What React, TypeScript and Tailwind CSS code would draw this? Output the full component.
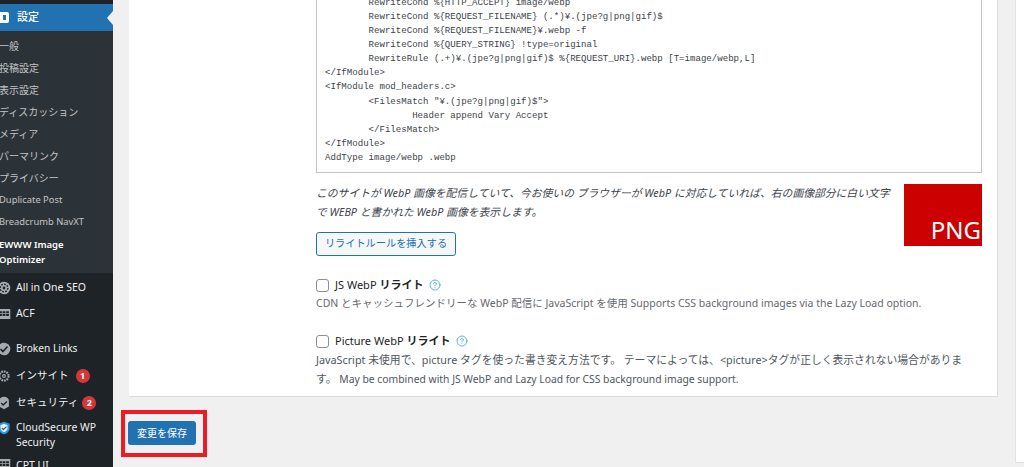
import { CircleHelp } from 'lucide-react';

const SANS = 'font-["Noto_Sans","Noto_Sans_CJK_JP",sans-serif]';

const code = `        RewriteCond %{HTTP_ACCEPT} image/webp
        RewriteCond %{REQUEST_FILENAME} (.*)¥.(jpe?g|png|gif)$
        RewriteCond %{REQUEST_FILENAME}¥.webp -f
        RewriteCond %{QUERY_STRING} !type=original
        RewriteRule (.+)¥.(jpe?g|png|gif)$ %{REQUEST_URI}.webp [T=image/webp,L]
</IfModule>
<IfModule mod_headers.c>
        <FilesMatch "¥.(jpe?g|png|gif)$">
                Header append Vary Accept
        </FilesMatch>
</IfModule>
AddType image/webp .webp`;

const subItems = ['一般', '投稿設定', '表示設定', 'ディスカッション', 'メディア', 'パーマリンク', 'プライバシー'];
const subItemsLatin = ['Duplicate Post', 'Breadcrumb NavXT'];

function Gear() {
  return (
    <svg viewBox="0 0 20 20" className="w-[14px] h-[14px] shrink-0 -ml-[3px]">
      <circle cx="10" cy="10" r="9" fill="#a7aaad" />
      <circle cx="10" cy="10" r="5.5" fill="none" stroke="#1d2327" strokeWidth="2" strokeDasharray="2.6 1.6" />
      <circle cx="10" cy="10" r="2" fill="#1d2327" />
    </svg>
  );
}

function Grid() {
  return (
    <svg viewBox="0 0 20 20" className="w-[14px] h-[14px] shrink-0 -ml-[3px]" fill="#a7aaad">
      <path d="M1 3h18v14H1V3Zm2 3v3h4V6H3Zm5 0v3h4V6H8Zm5 0v3h4V6h-4ZM3 10v3h4v-3H3Zm5 0v3h4v-3H8Zm5 0v3h4v-3h-4Z" fillRule="evenodd" />
    </svg>
  );
}

function Check() {
  return (
    <svg viewBox="0 0 20 20" className="w-[14px] h-[14px] shrink-0 -ml-[3px]">
      <circle cx="10" cy="10" r="9" fill="#a7aaad" />
      <path d="M5 10l3.5 3.5L15 6.5" fill="none" stroke="#1d2327" strokeWidth="2.4" />
    </svg>
  );
}

function Cog() {
  return (
    <svg viewBox="0 0 20 20" className="w-[14px] h-[14px] shrink-0 -ml-[3px]" fill="none" stroke="#a7aaad" strokeWidth="3" strokeDasharray="2.5 1.2">
      <circle cx="10" cy="10" r="6.5" />
      <circle cx="10" cy="10" r="2" strokeDasharray="none" strokeWidth="1.6" />
    </svg>
  );
}

function Lock() {
  return (
    <svg viewBox="0 0 20 20" className="w-[14px] h-[14px] shrink-0 -ml-[3px]">
      <path d="M3 7a7 6 0 0 1 14 0v8l-7 4-7-4V7Z" fill="#a7aaad" />
      <path d="M6 10l3 3 5-5" fill="none" stroke="#1d2327" strokeWidth="2" />
    </svg>
  );
}

function Shield() {
  return (
    <svg viewBox="0 0 20 20" className="w-[14px] h-[14px] shrink-0 -ml-[3px] mt-[1px]">
      <path d="M10 1l8 3v6c0 5-4 8-8 9-4-1-8-4-8-9V4l8-3Z" fill="#2a9ad6" />
      <path d="M10 4l5 2v4c0 3-2 5-5 6-3-1-5-3-5-6V6l5-2Z" fill="#f0f0f1" />
      <path d="M7 10l2.2 2.2L13.5 8" fill="none" stroke="#2271b1" strokeWidth="1.8" />
    </svg>
  );
}

function Badge({ n, className }: { n: number; className?: string }) {
  return (
    <span className={`w-[14px] h-[14px] rounded-full bg-[#d63638] text-white text-[9px] font-bold flex items-center justify-center shrink-0 ${className ?? ''}`}>{n}</span>
  );
}

function MenuRow({ icon, height, children }: { icon: React.ReactNode; height: string; children: React.ReactNode }) {
  return (
    <div className={`flex items-center gap-[5px] text-[#f0f0f1] text-[10.5px] ${height}`}>
      {icon}
      {children}
    </div>
  );
}

function Sidebar() {
  return (
    <div className={`w-[113px] shrink-0 bg-[#1d2327] overflow-hidden ${SANS}`}>
      <div className="h-[4px]" />
      <div className="h-[27px] bg-[#2271b1] flex items-center gap-[8px] relative text-white text-[11px] font-medium">
        <div className="w-[9px] h-[11px] bg-white rounded-r-[2px] flex items-center justify-center">
          <span className="w-[3px] h-[5px] bg-[#2271b1]" />
        </div>
        <span>設定</span>
        <span className="absolute right-0 top-[7px] border-y-[7px] border-y-transparent border-r-[6px] border-r-[#f0f0f1]" />
      </div>
      <div className="h-[242px] bg-[#2c3338] pt-[4px] -ml-[1px] text-[#c3c4c7] text-[10px]">
        {subItems.map((s) => (
          <div key={s} className="h-[22px] flex items-center whitespace-nowrap">{s}</div>
        ))}
        {subItemsLatin.map((s) => (
          <div key={s} className="h-[22px] flex items-center whitespace-nowrap text-[9.4px]">{s}</div>
        ))}
        <div className="text-white font-semibold text-[9.5px] leading-[15px] pt-[4px]">EWWW Image<br />Optimizer</div>
      </div>
      <div className="pt-[1px]">
        <MenuRow icon={<Gear />} height="h-[27px]">All in One SEO</MenuRow>
        <MenuRow icon={<Grid />} height="h-[25px]">ACF</MenuRow>
        <div className="h-[10px]" />
        <MenuRow icon={<Check />} height="h-[26px]"><span className="text-[10.2px]">Broken Links</span></MenuRow>
        <MenuRow icon={<Cog />} height="h-[27px]"><span>インサイト</span><Badge n={1} className="ml-[2px]" /></MenuRow>
        <MenuRow icon={<Lock />} height="h-[27px]"><span>セキュリティ</span><Badge n={2} className="-ml-[1px]" /></MenuRow>
        <div className="flex gap-[5px] text-[#f0f0f1] text-[10.4px] leading-[15px] pt-[4px] h-[41px]">
          <Shield />
          <span className="whitespace-nowrap">CloudSecure WP<br />Security</span>
        </div>
        <MenuRow icon={<Grid />} height="h-[14px]"><span className="translate-y-[2px]">CPT UI</span></MenuRow>
      </div>
    </div>
  );
}

function Help() {
  return <CircleHelp className="w-[12px] h-[12px] text-[#3aa0c8]" strokeWidth={1.6} />;
}

function Checkbox() {
  return <span className="w-[13px] h-[13px] rounded-[3px] border border-[#8c8f94] bg-white shrink-0" />;
}

function Main() {
  return (
    <div className={`flex-1 min-w-0 bg-[#f0f0f1] pl-[16px] pr-[17px] flex flex-col ${SANS}`}>
      <div className="h-[397px] shrink-0 bg-white border-r border-b border-[#dcdcde] pl-[187px] pr-[15px] flex flex-col">
        <div className="h-[173px] shrink-0 border border-[#c3c4c7] border-t-0 overflow-hidden flex flex-col justify-end pl-[8px] pb-[7px]">
          <pre className='font-["Liberation_Mono",monospace] text-[9.08px] leading-[14.1px] text-[#3c434a]'>{code}</pre>
        </div>
        <div className="flex justify-between mt-[11px]">
          <p className="w-[582px] -mt-[1px] italic text-[10.8px] leading-[19px] text-[#3c434a]">
            このサイトが WebP 画像を配信していて、今お使いの ブラウザーが WebP に対応していれば、右の画像部分に白い文字で WEBP と書かれた WebP 画像を表示します。
          </p>
          <div className="w-[78px] h-[62px] bg-[#cc0000] text-white flex items-end justify-end pr-[1px] text-[24px] leading-[32px]">PNG</div>
        </div>
        <div className="-mt-[16px] h-[24px] relative -top-[1px]">
          <span className="inline-flex items-center justify-center w-[140px] h-[24px] rounded-[3px] border border-[#2271b1] bg-[#f6f7f7] text-[#2271b1] text-[10.2px]">リライトルールを挿入する</span>
        </div>
        <div className="flex items-center gap-[6px] mt-[23px] h-[16px] text-[11px] text-[#1d2327]">
          <Checkbox />
          <span>JS WebP <b>リライト</b></span>
          <Help />
        </div>
        <p className="text-[10.5px] leading-[16px] text-[#646970] mt-[2px] whitespace-nowrap">CDN とキャッシュフレンドリーな WebP 配信に JavaScript を使用 Supports CSS background images via the Lazy Load option.</p>
        <div className="flex items-center gap-[6px] mt-[22px] h-[16px] text-[11px] text-[#1d2327]">
          <Checkbox />
          <span>Picture WebP <b>リライト</b></span>
          <Help />
        </div>
        <p className="text-[10.8px] leading-[19px] text-[#50575e] mt-[1px]">JavaScript 未使用で、picture タグを使った書き変え方法です。 テーマによっては、&lt;picture&gt;タグが正しく表示されない場合があります。 <span className="text-[10.35px]">May be combined with JS WebP and Lazy Load for CSS background image support.</span></p>
      </div>
      <div className="mt-[13px] -ml-[8px] w-[86px] h-[47px] border-[4px] border-[#ed1c24] flex items-center pl-[3px] pb-[1px]">
        <span className="w-[68px] h-[24px] rounded-[3px] bg-[#2271b1] text-white text-[10px] flex items-center justify-center">変更を保存</span>
      </div>
    </div>
  );
}

export default function App() {
  return (
    <div className="flex h-[467px] w-[1024px] overflow-hidden bg-[#f0f0f1]">
      <Sidebar />
      <Main />
      <div className="w-[9px] h-[463px] shrink-0 bg-white border-l border-b border-[#e2e2e2]" />
    </div>
  );
}
